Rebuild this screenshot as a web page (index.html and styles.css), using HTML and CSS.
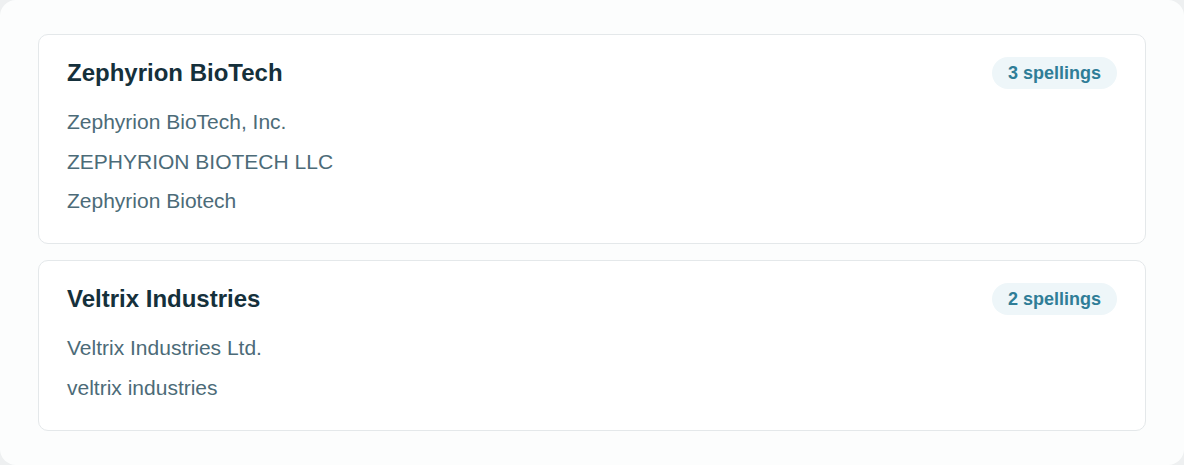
FILE: index.html
```html
<html>
<head>
    <link rel="stylesheet" href="styles.css">
</head>
<body>
    <div class="panel">
        <div class="group">
            <div class="group-head">
                <div class="group-name">Zephyrion BioTech</div>
                <span class="badge">3 spellings</span>
            </div>
            <ul class="variants">
                <li>Zephyrion BioTech, Inc.</li>
                <li>ZEPHYRION BIOTECH LLC</li>
                <li>Zephyrion Biotech</li>
            </ul>
        </div>
        <div class="group">
            <div class="group-head">
                <div class="group-name">Veltrix Industries</div>
                <span class="badge">2 spellings</span>
            </div>
            <ul class="variants">
                <li>Veltrix Industries Ltd.</li>
                <li>veltrix industries</li>
            </ul>
        </div>
    </div>
</body>
</html>
```

FILE: styles.css
```css
body {
    margin: 0;
    background-color: #eef0f1;
    font-family: "Liberation Sans", Arial, sans-serif;
}
.panel {
    background-color: #fcfdfd;
    border-radius: 16px;
    height: 465px;
    box-sizing: border-box;
    padding: 34px 38px;
    display: flex;
    flex-direction: column;
    gap: 16px;
}
.group {
    background-color: #ffffff;
    border: 1px solid #e4e8ea;
    border-radius: 10px;
    padding: 22px 28px 27.5px;
}
.group-head {
    display: flex;
    justify-content: space-between;
    align-items: center;
    height: 32px;
}
.group-name {
    font-size: 24px;
    font-weight: bold;
    color: #15303b;
}
.badge {
    background-color: #eef6f9;
    color: #2f7d97;
    font-size: 18px;
    font-weight: bold;
    border-radius: 16px;
    padding: 0 16px;
    height: 32px;
    line-height: 32px;
}
.variants {
    list-style: none;
    margin: 19px 0 0;
    padding: 0;
    display: flex;
    flex-direction: column;
    gap: 11px;
}
.variants li {
    font-size: 21px;
    line-height: 28.5px;
    color: #4c6b78;
}
```
